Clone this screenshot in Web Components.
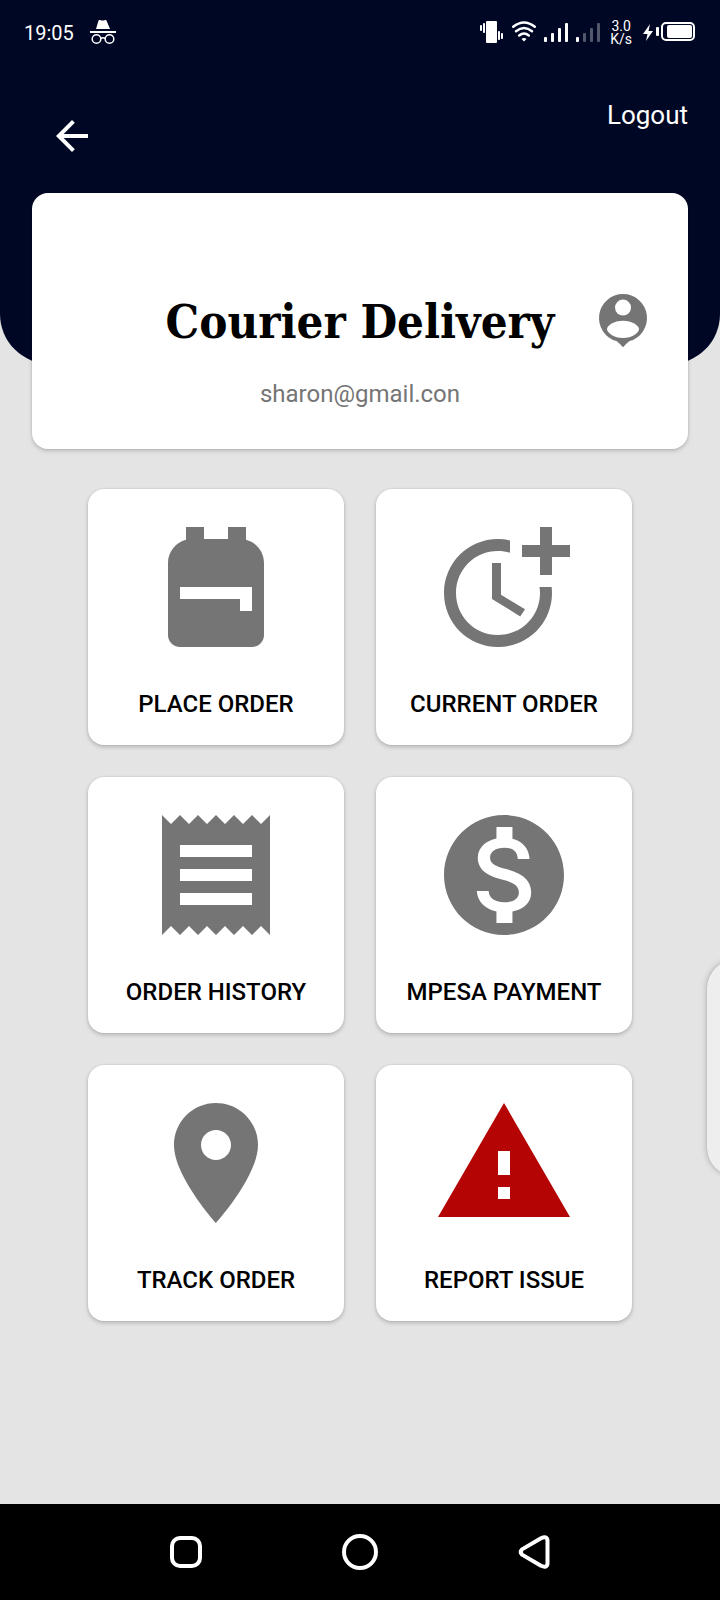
<!DOCTYPE html>
<html lang="en">
<head>
<meta charset="utf-8">
<meta name="viewport" content="width=device-width, initial-scale=1">
<title>Courier Delivery</title>
<style>
  body { margin: 0; background: #e4e4e4; font-family: Roboto, "Liberation Sans", sans-serif; }
</style>
</head>
<body>
<courier-app>
  <app-header slot="header">
    <status-bar slot="status">19:05</status-bar>
    Logout
  </app-header>
  <profile-card>
    Courier Delivery
    <span slot="email">sharon@gmail.con</span>
  </profile-card>
  <menu-grid>
    <menu-tile icon="bag">PLACE ORDER</menu-tile>
    <menu-tile icon="time">CURRENT ORDER</menu-tile>
    <menu-tile icon="receipt">ORDER HISTORY</menu-tile>
    <menu-tile icon="dollar">MPESA PAYMENT</menu-tile>
    <menu-tile icon="pin">TRACK ORDER</menu-tile>
    <menu-tile icon="warning">REPORT ISSUE</menu-tile>
  </menu-grid>
  <edge-handle slot="overlay"></edge-handle>
  <nav-bar slot="footer"></nav-bar>
</courier-app>

<script>
const define = (name, html, setup) => {
  const template = document.createElement('template');
  template.innerHTML = html;
  customElements.define(name, class extends HTMLElement {
    constructor() {
      super();
      this.attachShadow({ mode: 'open' }).append(template.content.cloneNode(true));
    }
    connectedCallback() { if (setup) setup(this); }
  });
};

define('courier-app', `
  <style>
    :host { display: flex; flex-direction: column; min-height: 100vh; position: relative; overflow: hidden; }
    main { flex: 1; display: flex; flex-direction: column; gap: 40px; margin: -171px 32px 40px; }
  </style>
  <slot name="header"></slot>
  <main><slot></slot></main>
  <slot name="footer"></slot>
  <slot name="overlay"></slot>
`);

define('app-header', `
  <style>
    :host { display: block; box-sizing: border-box; min-height: 364px; background: #000724; color: #fff;
            border-radius: 0 0 50px 50px; }
    .bar { display: flex; justify-content: space-between; align-items: flex-start; padding: 34px 32px 0 48px; }
    button { appearance: none; border: 0; padding: 0; background: none; color: inherit; font: inherit; cursor: pointer; }
    .back { margin-top: 12px; width: 48px; height: 48px; }
    .back svg { display: block; }
    .logout { font-size: 26px; line-height: 30px; }
  </style>
  <slot name="status"></slot>
  <div class="bar">
    <button class="back" aria-label="Back">
      <svg width="48" height="48" viewBox="0 0 24 24" fill="currentColor"><path d="M20 11H7.83l5.59-5.59L12 4l-8 8 8 8 1.41-1.41L7.83 13H20v-2z"/></svg>
    </button>
    <button class="logout"><slot></slot></button>
  </div>
`);

define('status-bar', `
  <style>
    :host { display: flex; align-items: center; height: 66px; padding: 0 24px; color: #fff; font-size: 20px; line-height: 24px; }
    .left { flex: 1; display: flex; align-items: center; gap: 15px; }
    .right { display: flex; align-items: center; gap: 8px; }
    svg { display: block; }
    .rate { margin: 0 2px; font-size: 14px; line-height: 13px; text-align: center; }
  </style>
  <div class="left">
    <span><slot></slot></span>
    <svg width="28" height="28" viewBox="0 0 28 28" fill="#fff">
      <path d="M7 10 9.500 1.500Q10 .6 11 1q3 1 5 0 1-.4 1.500.5L21 10z"/>
      <path d="M1 12h26v2H1z"/>
      <g fill="none" stroke="#fff" stroke-width="1.500"><circle cx="7.500" cy="20" r="4.300"/><circle cx="20.500" cy="20" r="4.300"/><path d="M11.800 19.300q2.200-1 4.400 0"/></g>
    </svg>
  </div>
  <div class="right">
    <svg width="24" height="24" viewBox="0 0 24 24" fill="#fff">
      <rect x="6" y="0" width="11" height="22" rx="1"/>
      <rect x="3" y="2" width="2" height="10" rx=".8"/><rect x="0" y="4" width="2" height="6" rx=".8"/>
      <rect x="18" y="10" width="2" height="9" rx=".8"/><rect x="21" y="12" width="2" height="6" rx=".8"/>
    </svg>
    <svg width="24" height="24" viewBox="0 0 24 24" fill="none" stroke="#fff" stroke-width="2.400" stroke-linecap="round">
      <path d="M1.200 5.800Q12-2.800 22.800 5.800M4 10.200q8-6.400 16 0M7.200 14.500q4.800-3.800 9.600 0"/>
      <path d="M9.500 18a3.400 3.400 0 0 1 5 0L12 20.500z" fill="#fff" stroke="none"/>
    </svg>
    <svg width="24" height="24" viewBox="0 0 24 24" fill="#fff">
      <rect y="16" width="3" height="5" rx="1"/><rect x="7" y="12" width="3" height="9" rx="1"/><rect x="14" y="7" width="3" height="14" rx="1"/><rect x="21" y="2" width="3" height="19" rx="1"/>
    </svg>
    <svg width="24" height="24" viewBox="0 0 24 24" fill="#fff">
      <rect y="16" width="3" height="5" rx="1"/><g opacity=".32"><rect x="7" y="12" width="3" height="9" rx="1"/><rect x="14" y="7" width="3" height="14" rx="1"/><rect x="21" y="2" width="3" height="19" rx="1"/></g>
    </svg>
    <div class="rate">3.0<br>K/s</div>
    <svg width="54" height="24" viewBox="0 0 54 24" fill="#fff">
      <path d="M8 3 1 13h4.500L4 20l7-10H6.500z"/>
      <rect x="14" y="6" width="3" height="9" rx="1"/>
      <rect x="20" y="2" width="32" height="17" rx="4" fill="none" stroke="#fff" stroke-width="2"/>
      <rect x="25" y="4" width="25" height="13" rx="2"/>
    </svg>
  </div>
`);

define('profile-card', `
  <style>
    :host { display: block; box-sizing: border-box; min-height: 256px; padding: 100px 37px 32px; background: #fff;
            border-radius: 16px; box-shadow: 0 2px 4px rgba(0,0,0,.18), 0 0 2px rgba(0,0,0,.12); }
    .row { display: grid; grid-template-columns: 1fr auto 1fr; align-items: center; }
    h1 { grid-column: 2; margin: 0; font: bold 47px/58px "Roboto Slab", "DejaVu Serif Condensed", "DejaVu Serif", serif; color: #000; white-space: nowrap; }
    svg { display: block; justify-self: end; }
    p { margin: 29px 0 0; text-align: center; font-size: 24px; line-height: 28px; color: #757575; }
  </style>
  <div class="row">
    <h1><slot></slot></h1>
    <svg width="56" height="56" viewBox="0 0 56 56">
      <path fill="#757575" d="M28 0a24 24 0 0 1 6.500 47.100Q32 49 28 53.300 24 49 21.500 47.100A24 24 0 0 1 28 0z"/>
      <circle cx="28" cy="13.600" r="8" fill="#fff"/>
      <path fill="#fff" d="M28 26.700c9 0 16 4.800 16 8.300 0 4-7 9-16 9s-16-5-16-9c0-3.500 7-8.300 16-8.300z"/>
    </svg>
  </div>
  <p><slot name="email"></slot></p>
`);

define('menu-grid', `
  <style>
    :host { display: grid; grid-template-columns: repeat(2, 256px); justify-content: center; gap: 32px; }
  </style>
  <slot></slot>
`);

const icons = {
  bag: '<path fill-rule="evenodd" d="M20 8v12c0 1.100-.9 2-2 2H6c-1.100 0-2-.9-2-2V8c0-1.860 1.280-3.410 3-3.860V2h3v2h4V2h3v2.140c1.720.45 3 2 3 3.860zM6 12v2h10v2h2v-4H6z"/>',
  time: '<path d="M10 8v6l4.700 2.900.8-1.200-4-2.400V8z"/><path d="M17.920 12c.05.330.08.660.08 1 0 3.900-3.100 7-7 7s-7-3.100-7-7 3.100-7 7-7c.7 0 1.370.1 2 .290V4.230C12.360 4.080 11.690 4 11 4c-5 0-9 4-9 9s4 9 9 9 9-4 9-9c0-.340-.02-.670-.06-1h-2.020z"/><path d="M20 5V2h-2v3h-3v2h3v3h2V7h3V5z"/>',
  receipt: '<path d="M18 17H6v-2h12v2zm0-4H6v-2h12v2zm0-4H6V7h12v2zM3 22l1.500-1.500L6 22l1.500-1.500L9 22l1.500-1.500L12 22l1.500-1.500L15 22l1.500-1.500L18 22l1.500-1.500L21 22V2l-1.500 1.500L18 2l-1.500 1.500L15 2l-1.500 1.500L12 2l-1.500 1.500L9 2 7.500 3.500 6 2 4.500 3.500 3 2v20z"/>',
  dollar: '<path d="M12 2C6.480 2 2 6.480 2 12s4.480 10 10 10 10-4.480 10-10S17.520 2 12 2zm1.410 16.090V20h-2.670v-1.930c-1.710-.36-3.160-1.460-3.270-3.400h1.960c.1 1.050.82 1.870 2.650 1.870 1.960 0 2.400-.98 2.400-1.590 0-.83-.44-1.610-2.670-2.140-2.480-.6-4.180-1.620-4.180-3.670 0-1.720 1.390-2.840 3.110-3.210V4h2.670v1.950c1.860.45 2.790 1.860 2.850 3.390H14.300c-.05-1.110-.64-1.870-2.220-1.870-1.500 0-2.400.68-2.400 1.640 0 .84.65 1.390 2.670 1.910s4.180 1.390 4.180 3.910c-.01 1.830-1.380 2.830-3.120 3.160z"/>',
  pin: '<path d="M12 2C8.130 2 5 5.130 5 9c0 5.250 7 13 7 13s7-7.750 7-13c0-3.870-3.130-7-7-7zm0 9.500c-1.380 0-2.500-1.120-2.500-2.500s1.120-2.500 2.500-2.500 2.500 1.120 2.500 2.500-1.120 2.500-2.500 2.500z"/>',
  warning: '<path fill="#b50404" d="M1 21h22L12 2 1 21zm12-3h-2v-2h2v2zm0-4h-2v-4h2v4z"/>'
};

define('menu-tile', `
  <style>
    :host { display: block; }
    button { display: flex; flex-direction: column; align-items: center; gap: 31px; box-sizing: border-box; width: 100%;
             padding: 26px 0 27px; border: 0; border-radius: 16px; background: #fff; color: #000; cursor: pointer;
             font: 500 24px/28px Roboto, "Liberation Sans", sans-serif;
             box-shadow: 0 2px 4px rgba(0,0,0,.2), 0 0 2px rgba(0,0,0,.12); }
    svg { display: block; width: 144px; height: 144px; fill: #757575; }
  </style>
  <button><svg viewBox="0 0 24 24"></svg><span><slot></slot></span></button>
`, el => {
  el.shadowRoot.querySelector('svg').innerHTML = icons[el.getAttribute('icon')] || '';
});

define('edge-handle', `
  <style>
    :host { position: absolute; top: 960px; right: -43px; width: 56px; height: 216px; border-radius: 28px;
            background: #eee; box-shadow: 0 0 6px rgba(0,0,0,.25), 0 0 1px rgba(0,0,0,.25); }
  </style>
`);

define('nav-bar', `
  <style>
    :host { display: flex; justify-content: center; gap: 78px; background: #000; }
    button { display: grid; place-items: center; width: 96px; height: 96px; padding: 0; border: 0; background: none; cursor: pointer; }
    svg { display: block; fill: none; stroke: #fff; stroke-width: 4; stroke-linejoin: round; }
  </style>
  <button aria-label="Recent apps"><svg width="40" height="40" viewBox="0 0 40 40"><rect x="6" y="6" width="28" height="28" rx="8"/></svg></button>
  <button aria-label="Home"><svg width="40" height="40" viewBox="0 0 40 40"><circle cx="20" cy="20" r="16"/></svg></button>
  <button aria-label="Back"><svg width="40" height="40" viewBox="0 0 40 40"><path d="M8 17.400 27 6.200Q33 3.500 33.500 8.500V31.500Q33 36.500 27 33.800L8 22.600Q5.500 20 8 17.400z"/></svg></button>
`);
</script>
</body>
</html>
